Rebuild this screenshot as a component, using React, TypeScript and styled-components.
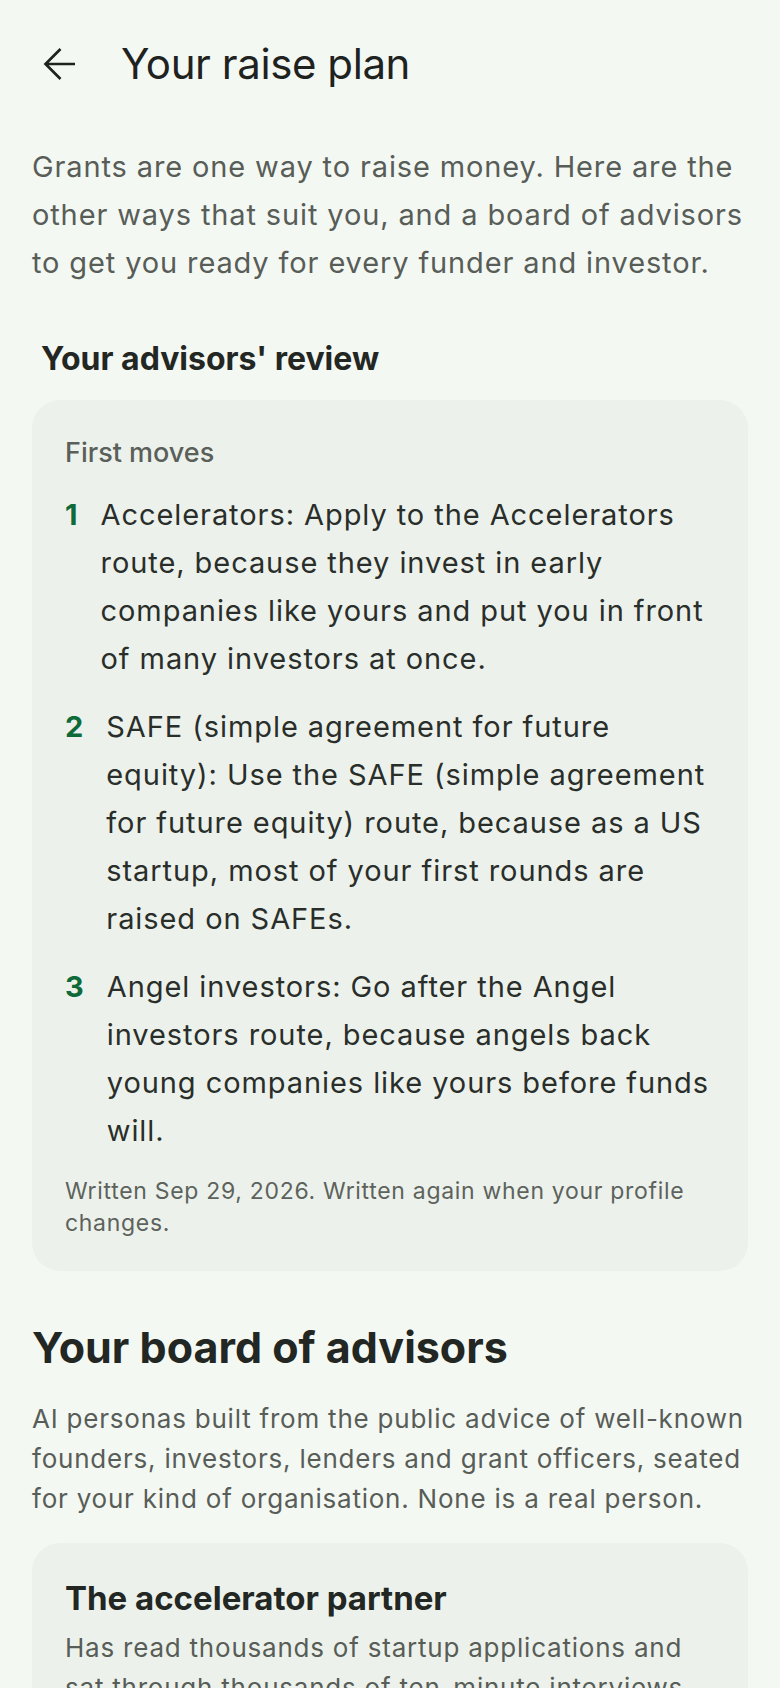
import React from "react";
import styled, { createGlobalStyle } from "styled-components";

const GlobalStyle = createGlobalStyle`
  html, body {
    margin: 0;
    padding: 0;
    background: #f4f8f3;
  }
  body {
    font-family: Inter, Roboto, "Liberation Sans", sans-serif;
    color: #1f231f;
    -webkit-font-smoothing: antialiased;
  }
  * { box-sizing: border-box; }
`;

const Page = styled.main`
  min-height: 1688px;
  padding: 0 32px 40px;
  background: #f4f8f3;
`;

const Header = styled.header`
  display: flex;
  align-items: center;
  gap: 37px;
  padding-top: 36px;
  margin-left: 4px;
`;

const IconButton = styled.button`
  width: 48px;
  height: 48px;
  display: flex;
  align-items: center;
  justify-content: center;
  border: none;
  background: transparent;
  padding: 0;
  color: #1f231f;
  cursor: pointer;
`;

const Title = styled.h1`
  margin: 0;
  font-size: 42px;
  line-height: 56px;
  font-weight: 400;
  letter-spacing: -0.01em;
  color: #1f231f;
`;

const Lead = styled.p<{ $size: number; $line: number; $top: number }>`
  margin: ${(p) => p.$top}px 0 0;
  font-size: ${(p) => p.$size}px;
  line-height: ${(p) => p.$line}px;
  letter-spacing: 0.03em;
  color: #585d58;
  font-weight: 400;
`;

const SubHeading = styled.h2`
  margin: 50px 0 0 9px;
  font-size: 32px;
  line-height: 44px;
  font-weight: 700;
  color: #232723;
`;

const SectionTitle = styled.h2`
  margin: 48px 0 0;
  font-size: 43px;
  line-height: 56px;
  font-weight: 700;
  color: #232723;
`;

const Card = styled.section<{ $top: number }>`
  margin-top: ${(p) => p.$top}px;
  background: #ecf2eb;
  border-radius: 28px;
  padding: 35px 33px 32px;
`;

const CardLabel = styled.div`
  font-size: 27px;
  line-height: 36px;
  font-weight: 500;
  color: #5a5f5a;
`;

const MoveList = styled.ol`
  list-style: none;
  margin: 20px 0 0;
  padding: 0;
  display: flex;
  flex-direction: column;
  gap: 20px;
`;

const Move = styled.li`
  display: flex;
  gap: 23px;
  align-items: flex-start;
`;

const MoveNumber = styled.span`
  flex: none;
  font-size: 29px;
  line-height: 48px;
  font-weight: 700;
  color: #0f6a39;
`;

const MoveText = styled.span`
  font-size: 29px;
  line-height: 48px;
  letter-spacing: 0.032em;
  color: #2a2e2a;
`;

const Footnote = styled.p`
  margin: 20px 0 0;
  font-size: 23px;
  line-height: 32px;
  letter-spacing: 0.03em;
  color: #5d625d;
`;

const AdvisorName = styled.h3`
  margin: 0;
  font-size: 33px;
  line-height: 40px;
  font-weight: 700;
  color: #232723;
`;

const AdvisorBio = styled.p`
  margin: 10px 0 0;
  font-size: 26px;
  line-height: 40px;
  letter-spacing: 0.03em;
  color: #585d58;
`;

const BackArrow = () => (
  <svg width="34" height="34" viewBox="0 0 34 34" fill="none" aria-hidden="true">
    <path
      d="M32 17H2.5M17.5 2 2.5 17l15 15"
      stroke="currentColor"
      strokeWidth="2.7"
      strokeLinecap="butt"
      strokeLinejoin="miter"
    />
  </svg>
);

const moves = [
  {
    n: "1",
    text: "Accelerators: Apply to the Accelerators route, because they invest in early companies like yours and put you in front of many investors at once.",
  },
  {
    n: "2",
    text: "SAFE (simple agreement for future equity): Use the SAFE (simple agreement for future equity) route, because as a US startup, most of your first rounds are raised on SAFEs.",
  },
  {
    n: "3",
    text: "Angel investors: Go after the Angel investors route, because angels back young companies like yours before funds will.",
  },
];

export default function App() {
  return (
    <>
      <GlobalStyle />
      <Page>
        <Header>
          <IconButton aria-label="Back">
            <BackArrow />
          </IconButton>
          <Title>Your raise plan</Title>
        </Header>

        <Lead $size={29} $line={48} $top={51}>
          Grants are one way to raise money. Here are the other ways that suit you, and a board of advisors to get you ready for every funder and investor.
        </Lead>

        <SubHeading>Your advisors' review</SubHeading>

        <Card $top={19}>
          <CardLabel>First moves</CardLabel>
          <MoveList>
            {moves.map((m) => (
              <Move key={m.n}>
                <MoveNumber>{m.n}</MoveNumber>
                <MoveText>{m.text}</MoveText>
              </Move>
            ))}
          </MoveList>
          <Footnote>Written Sep 29, 2026. Written again when your profile changes.</Footnote>
        </Card>

        <SectionTitle>Your board of advisors</SectionTitle>
        <Lead $size={26} $line={40} $top={24}>
          AI personas built from the public advice of well-known founders, investors, lenders and grant officers, seated for your kind of organisation. None is a real person.
        </Lead>

        <Card $top={24}>
          <AdvisorName>The accelerator partner</AdvisorName>
          <AdvisorBio>
            Has read thousands of startup applications and sat through thousands of ten-minute interviews. Knows what makes a partner lean in.
          </AdvisorBio>
        </Card>
      </Page>
    </>
  );
}
